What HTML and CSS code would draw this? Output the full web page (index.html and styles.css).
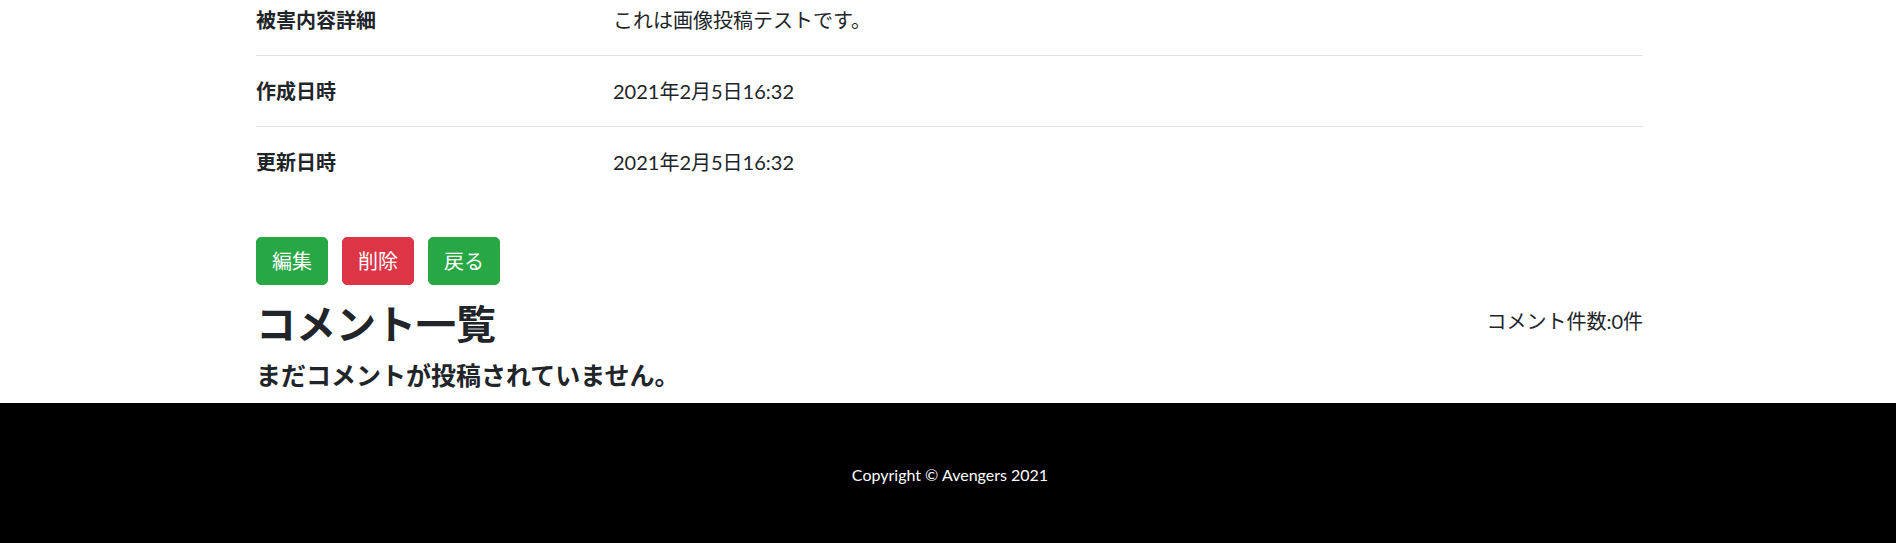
FILE: index.html
```html
<!DOCTYPE html>
<html lang="ja">
<head>
<meta charset="utf-8">
<title>被害詳細</title>
<link rel="stylesheet" href="styles.css">
</head>
<body>
<main class="container">
  <table class="detail-table">
    <tbody>
      <tr><th>被害内容詳細</th><td>これは画像投稿テストです。</td></tr>
      <tr><th>作成日時</th><td>2021年2月5日16:32</td></tr>
      <tr><th>更新日時</th><td>2021年2月5日16:32</td></tr>
    </tbody>
  </table>
  <div class="actions">
    <a class="btn btn-success" href="#">編集</a>
    <a class="btn btn-danger" href="#">削除</a>
    <a class="btn btn-success" href="#">戻る</a>
  </div>
  <div class="comment-head">
    <h2 class="comment-title">コメント一覧</h2>
    <span class="comment-count">コメント件数:0件</span>
  </div>
  <h5 class="no-comment">まだコメントが投稿されていません。</h5>
</main>
<footer class="footer">
  <p class="copyright">Copyright © Avengers 2021</p>
</footer>
</body>
</html>
```
FILE: styles.css
```css
html, body {
  margin: 0;
  padding: 0;
  background: #fff;
}
body {
  font-family: Lato, "Noto Sans CJK JP", sans-serif;
  font-size: 20px;
  line-height: 30px;
  color: #212529;
}
.container {
  width: 1387px;
  margin-left: calc(50% - 692px);
  margin-top: -16px;
}
.detail-table {
  width: 100%;
  border-collapse: collapse;
  margin-bottom: 40px;
}
.detail-table th,
.detail-table td {
  border-top: 1px solid #dee2e6;
  padding: 20px 0;
  text-align: left;
  vertical-align: top;
}
.detail-table th {
  width: 357px;
  font-weight: 700;
}
.detail-table td {
  font-weight: 400;
}
.actions {
  display: flex;
  gap: 14px;
}
.btn {
  display: inline-block;
  padding: 8px 15px;
  border: 1px solid transparent;
  border-radius: 5px;
  color: #fff;
  text-decoration: none;
  font-size: 20px;
  line-height: 30px;
}
.btn-success {
  background: #28a745;
  border-color: #28a745;
}
.btn-danger {
  background: #dc3545;
  border-color: #dc3545;
}
.comment-head {
  display: flex;
  justify-content: space-between;
  align-items: center;
  margin-top: 15px;
}
.comment-title {
  margin: 0;
  font-size: 40px;
  line-height: 48px;
  font-weight: 700;
}
.comment-count {
  font-size: 20px;
  line-height: 30px;
  margin-top: -6px;
}
.no-comment {
  margin: 12px 0 0;
  font-size: 25px;
  line-height: 30px;
  font-weight: 700;
}
.footer {
  margin-top: 13px;
  background: #000;
  color: #fff;
  padding: 60px 0 56px 4px;
  text-align: center;
}
.copyright {
  margin: 0;
  font-size: 16px;
  line-height: 24px;
}
```
